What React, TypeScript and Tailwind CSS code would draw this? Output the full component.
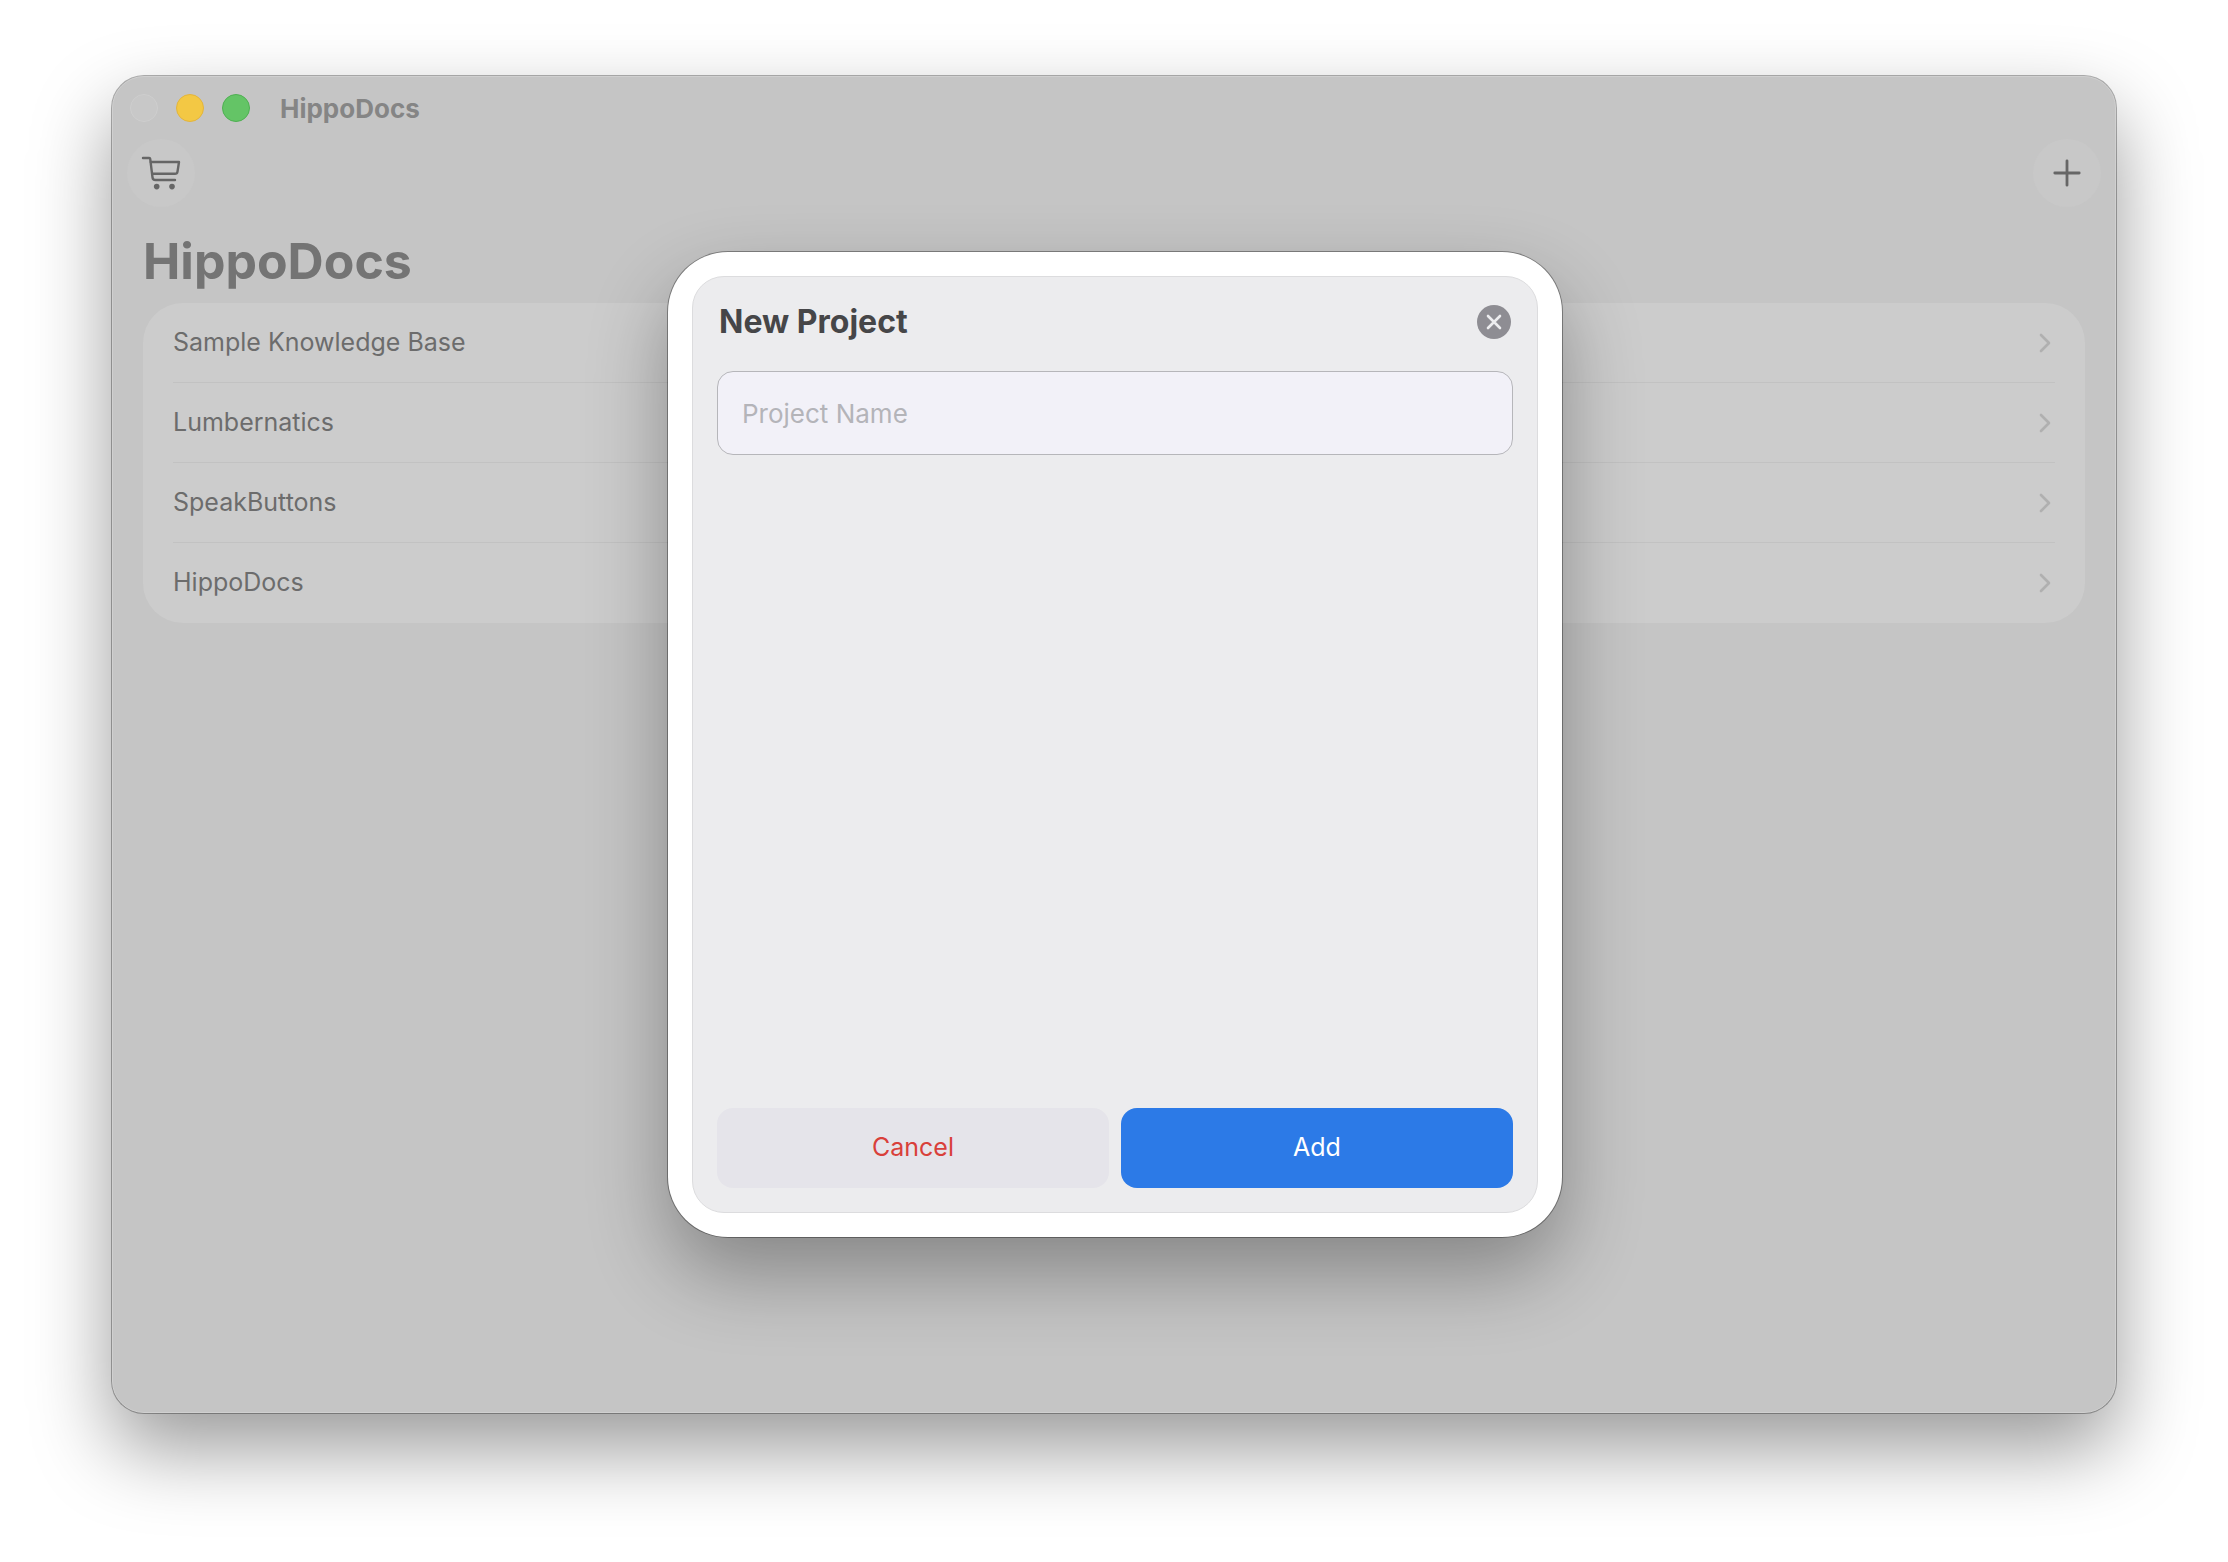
import { useState } from "react";

const projects = [
  "Sample Knowledge Base",
  "Lumbernatics",
  "SpeakButtons",
  "HippoDocs",
];

function CartIcon() {
  return (
    <svg
      width="40"
      height="34"
      viewBox="0 0 40 34"
      fill="none"
      stroke="currentColor"
      strokeWidth="2.4"
      strokeLinecap="round"
      strokeLinejoin="round"
      aria-hidden="true"
    >
      <path d="M2 2h6.2a1 1 0 0 1 1 .9l2.3 18.4a3 3 0 0 0 3 2.7H34" />
      <path d="M9.8 6H38l-1.5 9.6a2.6 2.6 0 0 1-2.6 2.2H11.2" />
      <circle cx="15.7" cy="30.6" r="2.8" fill="currentColor" stroke="none" />
      <circle cx="31" cy="30.6" r="2.8" fill="currentColor" stroke="none" />
    </svg>
  );
}

function PlusIcon() {
  return (
    <svg
      width="28"
      height="28"
      viewBox="0 0 28 28"
      stroke="currentColor"
      strokeWidth="2.8"
      strokeLinecap="round"
      aria-hidden="true"
    >
      <path d="M14 1.8v24.4M1.8 14h24.4" />
    </svg>
  );
}

function ChevronIcon() {
  return (
    <svg
      width="12"
      height="20"
      viewBox="0 0 12 20"
      fill="none"
      stroke="currentColor"
      strokeWidth="2.6"
      strokeLinecap="round"
      strokeLinejoin="round"
      aria-hidden="true"
    >
      <path d="M2 2l8 8-8 8" />
    </svg>
  );
}

function CloseIcon() {
  return (
    <svg
      width="34"
      height="34"
      viewBox="0 0 34 34"
      stroke="#ededef"
      strokeWidth="2.6"
      strokeLinecap="round"
      aria-hidden="true"
    >
      <path d="M11 11l12 12M23 11L11 23" />
    </svg>
  );
}

function NewProjectDialog() {
  const [name, setName] = useState("");

  return (
    <div
      role="dialog"
      aria-labelledby="dialog-title"
      className="flex h-[985px] w-full max-w-[894px] rounded-[60px] bg-white p-6 shadow-[0_0_0_1px_rgba(0,0,0,0.35),0_36px_80px_rgba(0,0,0,0.32)]"
    >
      <form
        className="flex flex-1 flex-col rounded-4xl border border-[#dcdcde] bg-[#ececee] p-6"
        onSubmit={(e) => e.preventDefault()}
      >
        <div className="flex h-[42px] items-center justify-between px-0.5">
          <h2
            id="dialog-title"
            className="text-[32px] leading-10 font-bold text-[#464648]"
          >
            New Project
          </h2>
          <button
            type="button"
            aria-label="Close"
            className="rounded-full bg-[#8e8d93]"
          >
            <CloseIcon />
          </button>
        </div>

        <input
          type="text"
          aria-label="Project Name"
          placeholder="Project Name"
          value={name}
          onChange={(e) => setName(e.target.value)}
          className="mt-7 h-21 w-full rounded-2xl border border-[#b6b6ba] bg-[#f2f1f8] px-6 text-[26px] text-[#464648] outline-none placeholder:text-[#b4b4b9]"
        />

        <div className="mt-auto grid grid-cols-2 gap-3">
          <button
            type="button"
            className="h-20 rounded-2xl bg-[#e5e4ea] text-[25px] text-[#d9403a]"
          >
            Cancel
          </button>
          <button
            type="submit"
            className="h-20 rounded-2xl bg-[#2c7ae7] text-[25px] text-white"
          >
            Add
          </button>
        </div>
      </form>
    </div>
  );
}

export default function App() {
  return (
    <div className="flex min-h-screen bg-white px-28 pt-19 pb-[149px] font-['Inter',sans-serif]">
      {/* Window */}
      <div className="relative flex-1 rounded-4xl border border-[#d0d0d0] bg-[#c5c5c5] shadow-[0_0_0_1px_rgba(0,0,0,0.3),0_36px_80px_rgba(0,0,0,0.4)]">
        {/* Title bar */}
        <div className="flex h-[62px] items-center gap-[18px] px-[17px]">
          <span className="size-7 rounded-full border border-[#cecece] bg-[#c8c8c8]"></span>
          <span className="size-7 rounded-full border border-[#e3b53c] bg-[#f3c844]"></span>
          <span className="size-7 rounded-full border border-[#4fb052] bg-[#64c466]"></span>
          <span className="ml-3 text-[26px] font-bold text-[#858585]">
            HippoDocs
          </span>
        </div>

        {/* Toolbar */}
        <div className="flex items-center justify-between px-3.5 text-[#666666]">
          <button
            type="button"
            aria-label="Store"
            className="flex size-[68px] items-center justify-center rounded-full bg-[#c8c8c8]"
          >
            <CartIcon />
          </button>
          <button
            type="button"
            aria-label="New project"
            className="flex size-[68px] items-center justify-center rounded-full bg-[#c8c8c8]"
          >
            <PlusIcon />
          </button>
        </div>

        {/* Projects */}
        <main className="px-[30px] pt-6">
          <h1 className="text-[50px] leading-[60px] font-bold text-[#747474]">
            HippoDocs
          </h1>
          <ul className="mt-3 rounded-[40px] bg-[#cccccc] px-[30px]">
            {projects.map((project) => (
              <li
                key={project}
                className="h-20 border-b border-[#c2c2c2] last:border-b-0"
              >
                <a
                  href="#"
                  className="flex h-full items-center justify-between text-[25px] text-[#6c6c6c]"
                >
                  {project}
                  <span className="pr-1 text-[#b0b0b0]">
                    <ChevronIcon />
                  </span>
                </a>
              </li>
            ))}
          </ul>
        </main>

        {/* Sheet over the window */}
        <div className="absolute inset-x-0 top-0 flex justify-center pt-[175px] pl-0.5">
          <NewProjectDialog />
        </div>
      </div>
    </div>
  );
}
